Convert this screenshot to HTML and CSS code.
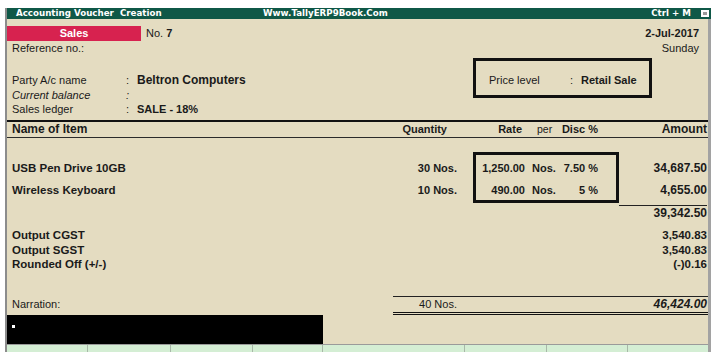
FILE: index.html
```html
<!DOCTYPE html>
<html>
<head>
<meta charset="utf-8">
<link rel="stylesheet" href="styles.css">
</head>
<body>
<div class="topstrip"></div>
<div class="window">
  <div class="titlebar">
    <span class="t-left">Accounting Voucher&nbsp; Creation</span>
    <span class="t-center">Www.TallyERP9Book.Com</span>
    <span class="t-right">Ctrl + M</span>
    <span class="t-btn"><span class="t-btn-in"></span></span>
  </div>
  <div class="voucher">
    <div class="vhead">
      <div class="vhead-left">
        <div class="vtype-row"><span class="vtype">Sales</span><span class="vno">No. <b>7</b></span></div>
        <div class="ref">Reference no.:</div>
      </div>
      <div class="vhead-right">
        <div class="date">2-Jul-2017</div>
        <div class="day">Sunday</div>
      </div>
    </div>

    <div class="party">
      <div class="party-fields">
        <div class="field"><span class="flabel">Party A/c name</span><span class="fcolon">:</span><span class="fval big">Beltron Computers</span></div>
        <div class="field ital"><span class="flabel">Current balance</span><span class="fcolon">:</span><span class="fval"></span></div>
        <div class="field"><span class="flabel">Sales ledger</span><span class="fcolon">:</span><span class="fval">SALE - 18%</span></div>
      </div>
      <div class="pricebox"><span class="plabel">Price level</span><span class="fcolon">:</span><span class="fval">Retail Sale</span></div>
    </div>

    <div class="cols thead">
      <span class="c-name h-big">Name of Item</span>
      <span class="c-qty h-qty">Quantity</span>
      <span class="c-rate h-rate">Rate</span>
      <span class="c-per h-per">per</span>
      <span class="c-disc">Disc %</span>
      <span class="c-amt h-big">Amount</span>
    </div>

    <div class="cols items">
      <div class="ratebox"></div>
      <span class="c-name item-name r1">USB Pen Drive 10GB</span>
      <span class="c-qty r1">30 Nos.</span>
      <span class="c-rate r1">1,250.00</span>
      <span class="c-per r1">Nos.</span>
      <span class="c-disc r1">7.50 %</span>
      <span class="c-amt big-amt r1">34,687.50</span>
      <span class="c-name item-name r2">Wireless Keyboard</span>
      <span class="c-qty r2">10 Nos.</span>
      <span class="c-rate r2">490.00</span>
      <span class="c-per r2">Nos.</span>
      <span class="c-disc r2">5 %</span>
      <span class="c-amt big-amt r2">4,655.00</span>
    </div>

    <div class="cols subtotal">
      <span class="c-amt big-amt sub-amt">39,342.50</span>
    </div>

    <div class="taxes">
      <div class="cols tax"><span class="c-name">Output CGST</span><span class="c-amt">3,540.83</span></div>
      <div class="cols tax"><span class="c-name">Output SGST</span><span class="c-amt">3,540.83</span></div>
      <div class="cols tax"><span class="c-name">Rounded Off (+/-)</span><span class="c-amt">(-)0.16</span></div>
    </div>

    <div class="narration">
      <span class="narr-label">Narration:</span>
      <div class="grand">
        <span class="grand-qty">40 Nos.</span>
        <span class="grand-amt">46,424.00</span>
      </div>
    </div>
    <div class="narr-input"><span class="cursor"></span></div>
  </div>
  <div class="buttonbar">
    <span class="bseg w81"></span><span class="bseg w83"></span><span class="bseg w82"></span><span class="bseg w70"></span><span class="bseg w142"></span><span class="bseg w82"></span><span class="bseg w81"></span><span class="bseg last"></span>
  </div>
</div>
</body>
</html>
```
FILE: styles.css
```css
* { box-sizing: border-box; }
html, body { margin: 0; padding: 0; background: #ffffff; overflow: hidden; }
body {
  width: 715px;
  height: 352px;
  font-family: "Liberation Sans", Arial, sans-serif;
  font-size: 11px;
  color: #1a1a1a;
}
.topstrip { height: 8px; background: #ffffff; }
.window {
  margin-left: 5px;
  width: 706px;
  border-left: 2px solid #8c8c8c;
  border-right: 3px solid #a2a2a2;
}
.titlebar {
  height: 11px;
  margin-right: -3px;
  background: #0f5847;
  color: #ffffff;
  font-family: "DejaVu Sans", Verdana, sans-serif;
  font-weight: bold;
  font-size: 8.7px;
  line-height: 11px;
  display: flex;
  align-items: center;
  white-space: nowrap;
}
.t-left { width: 256px; padding-left: 9px; }
.t-right { margin-left: auto; }
.t-btn {
  width: 8px; height: 7px;
  margin-left: 10px; margin-right: 2px;
  background: #ffffff;
  display: flex; align-items: center; justify-content: center;
}
.t-btn-in { width: 4px; height: 3px; background: #9a9a9a; }

.voucher {
  background: #e4dcc1;
  border-bottom: 1px solid #9a9a9a;
  height: 326px;
}
.vhead { display: flex; padding-top: 7px; height: 37px; }
.vhead-left { flex: 1; }
.vtype-row { display: flex; height: 15px; align-items: center; }
.vtype {
  width: 134px; height: 15px;
  background: #d7224f;
  color: #ffffff;
  font-weight: bold;
  text-align: center;
  line-height: 15px;
}
.vno { margin-left: 5px; line-height: 15px; }
.ref { padding-left: 5px; line-height: 15px; }
.vhead-right { padding-right: 9px; text-align: right; }
.date { font-weight: bold; line-height: 15px; }
.day { line-height: 15px; }

.party { display: flex; margin-top: 2px; height: 62px; }
.party-fields { width: 466px; padding-left: 5px; padding-top: 15px; }
.field { display: flex; line-height: 14.5px; }
.flabel { width: 114px; }
.fcolon { width: 11px; }
.fval { font-weight: bold; }
.fval.big { font-size: 12px; }
.ital { font-style: italic; }
.pricebox {
  width: 179px; height: 40px;
  border: 3px solid #111111;
  padding-left: 13px; padding-top: 12px;
  display: flex; line-height: 14px;
}
.plabel { width: 81px; }

.cols {
  display: grid;
  grid-template-columns: 388px 57px 16px 52px 35px 38px 21px 88px;
  padding: 0 1px 0 5px;
  white-space: nowrap;
}
.c-name { grid-column: 1; }
.c-qty { grid-column: 2; text-align: right; }
.c-rate { grid-column: 4; text-align: right; }
.c-per { grid-column: 5; padding-left: 7px; }
.c-disc { grid-column: 6; text-align: right; }
.c-amt { grid-column: 8; text-align: right; }

.thead {
  border-top: 2px solid #111111;
  border-bottom: 1px solid #2a2a2a;
  line-height: 15px;
  height: 18px;
  font-weight: bold;
}
.h-big { font-size: 12px; }
.h-qty { padding-right: 10px; }
.h-rate { padding-right: 3px; }
.h-per { font-weight: normal; padding-left: 12px; font-size: 10.5px; }

.items {
  margin-top: 14px;
  grid-template-rows: 5px 22px 22px 2px;
  font-weight: bold;
  line-height: 22px;
}
.item-name { font-size: 11.5px; }
.big-amt { font-size: 12px; }
.ratebox {
  grid-column: 4 / 8;
  grid-row: 1 / 5;
  border: 3px solid #111111;
}
.r1 { grid-row: 2; }
.r2 { grid-row: 3; }

.subtotal { margin-top: 2px; font-weight: bold; }
.sub-amt { border-top: 1px solid #222222; line-height: 14px; }

.taxes { margin-top: 8px; }
.tax { font-weight: bold; line-height: 14.5px; font-size: 11.5px; }

.narration { display: flex; margin-top: 24.5px; height: 19px; }
.narr-label { padding-left: 5px; padding-top: 1px; line-height: 15px; }
.grand {
  margin-left: auto;
  width: 315px;
  border-top: 1px solid #222222;
  border-bottom: 3px double #111111;
  display: flex;
  line-height: 15px;
}
.grand-qty { width: 64px; text-align: right; }
.grand-amt { flex: 1; text-align: right; padding-right: 1px; font-weight: bold; font-style: italic; font-size: 12px; }

.narr-input { width: 316px; height: 29px; background: #000000; padding-left: 5px; padding-top: 10px; }
.cursor { display: block; width: 3px; height: 3px; background: #ffffff; }

.buttonbar { display: flex; height: 10px; background: #d4eed4; }
.bseg { height: 10px; border-right: 1px solid #a8b8a8; }
.w81 { width: 81px; }
.w83 { width: 83px; }
.w82 { width: 82px; }
.w70 { width: 70px; }
.w142 { width: 142px; }
.bseg.last { flex: 1; border-right: none; }
```
